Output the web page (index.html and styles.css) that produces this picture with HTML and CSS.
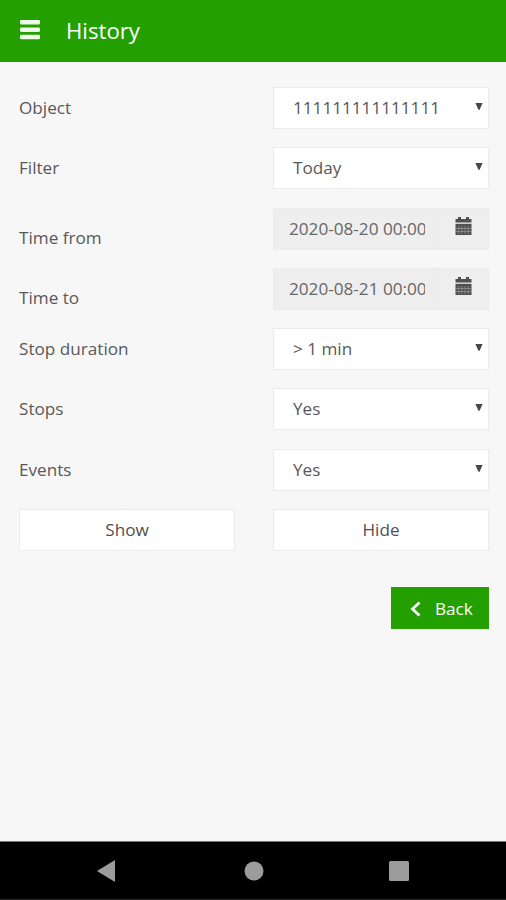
FILE: index.html
```html
<!DOCTYPE html>
<html lang="en">
<head>
<meta charset="utf-8">
<title>History</title>
<link rel="stylesheet" href="styles.css">
</head>
<body>
<header class="topbar">
  <svg class="menu-icon" width="20" height="20" viewBox="0 0 20 20"><rect y="0" width="20" height="4.5" rx="1.3"/><rect y="7.4" width="20" height="4.5" rx="1.3"/><rect y="14.8" width="20" height="4.5" rx="1.3"/></svg>
  <h1 class="title"><span>History</span></h1>
</header>
<main class="content">
  <div class="form">
    <div class="label"><span>Object</span></div>
    <div class="select"><span>111111111111111</span><svg class="arrow" width="8" height="7" viewBox="0 0 8 7"><path d="M0.4 0H7.6L4.6 6.8H3.4Z"/></svg></div>
    <div class="label"><span>Filter</span></div>
    <div class="select"><span>Today</span><svg class="arrow" width="8" height="7" viewBox="0 0 8 7"><path d="M0.4 0H7.6L4.6 6.8H3.4Z"/></svg></div>
    <div class="label label-date"><span>Time from</span></div>
    <div class="date"><div class="date-value"><span>2020-08-20 00:00</span></div><div class="date-addon"><svg width="17" height="18" viewBox="0 0 17 18"><path d="M.5 2H3V0H6V2H11V0H14V2H16.5V5.6H.5Z"/><path d="M.5 6.8H16.5V18H.5Z"/><path class="grid-lines" d="M3.7 9V17M6.9 9V17M10.1 9V17M13.3 9V17M1 11.5H16M1 14.5H16"/></svg></div></div>
    <div class="label label-date"><span>Time to</span></div>
    <div class="date"><div class="date-value"><span>2020-08-21 00:00</span></div><div class="date-addon"><svg width="17" height="18" viewBox="0 0 17 18"><path d="M.5 2H3V0H6V2H11V0H14V2H16.5V5.6H.5Z"/><path d="M.5 6.8H16.5V18H.5Z"/><path class="grid-lines" d="M3.7 9V17M6.9 9V17M10.1 9V17M13.3 9V17M1 11.5H16M1 14.5H16"/></svg></div></div>
    <div class="label"><span>Stop duration</span></div>
    <div class="select"><span>&gt; 1 min</span><svg class="arrow" width="8" height="7" viewBox="0 0 8 7"><path d="M0.4 0H7.6L4.6 6.8H3.4Z"/></svg></div>
    <div class="label"><span>Stops</span></div>
    <div class="select"><span>Yes</span><svg class="arrow" width="8" height="7" viewBox="0 0 8 7"><path d="M0.4 0H7.6L4.6 6.8H3.4Z"/></svg></div>
    <div class="label"><span>Events</span></div>
    <div class="select"><span>Yes</span><svg class="arrow" width="8" height="7" viewBox="0 0 8 7"><path d="M0.4 0H7.6L4.6 6.8H3.4Z"/></svg></div>
    <button class="button" type="button">Show</button>
    <button class="button" type="button">Hide</button>
  </div>
  <button class="back" type="button"><svg width="11" height="16" viewBox="0 0 11 16"><path d="M9.5 1.5L2.5 8L9.5 14.5"/></svg><span>Back</span></button>
</main>
<nav class="navbar">
  <svg width="18" height="22" viewBox="0 0 18 22"><path d="M0 11L18 0V22Z"/></svg>
  <svg class="home" width="20" height="20" viewBox="0 0 20 20"><circle cx="10" cy="10" r="9.5"/></svg>
  <svg width="20" height="20" viewBox="0 0 20 20"><rect width="20" height="20" rx="1.5"/></svg>
</nav>
</body>
</html>
```
FILE: styles.css
```css
* {
  box-sizing: border-box;
}

body {
  margin: 0;
  height: 900px;
  display: flex;
  flex-direction: column;
  background: #f7f7f7;
  color: #585858;
  font: 17.15px/24px "Open Sans", sans-serif;
}

svg {
  display: block;
  flex: none;
}

.topbar {
  height: 62px;
  flex: none;
  display: flex;
  align-items: center;
  gap: 26px;
  padding: 0 20px;
  background: #239f00;
  color: #fff;
}

.menu-icon {
  fill: #eefbe9;
  margin-bottom: 3px;
}

.title {
  margin: 0;
  font-size: 22.2px;
  font-weight: 400;
  line-height: 30px;
}

.content {
  flex: 1;
  display: flex;
  flex-direction: column;
  padding: 25px 17px 0 19px;
}

.form {
  display: grid;
  grid-template-columns: 216px 216px;
  grid-auto-rows: 42px;
  gap: 18.3px 38px;
}

.label {
  display: flex;
  align-items: center;
}

.label-date {
  padding-top: 18px;
}

.select {
  display: flex;
  align-items: center;
  justify-content: space-between;
  padding: 0 5.5px 0 19px;
  background: #fff;
  border: 1px solid #ebebeb;
}

.arrow {
  fill: #484848;
  margin-bottom: 3px;
}

.date {
  display: flex;
  background: #eee;
  border: 1px solid #ebebeb;
}

.date-value {
  display: flex;
  align-items: center;
  width: 137px;
  margin-left: 15px;
  overflow: hidden;
  white-space: nowrap;
  color: #666;
}

.date-value span {
  width: 136px;
  overflow: hidden;
}

.date-addon {
  flex: 1;
  display: flex;
  justify-content: center;
  margin-left: 12px;
  padding-top: 8px;
  border-left: 1px solid #ebebeb;
  fill: #505050;
}

.grid-lines {
  stroke: #999;
  stroke-width: 0.7;
  fill: none;
}

.button {
  padding: 0;
  background: #fff;
  border: 1px solid #ebebeb;
  color: #505050;
  font: inherit;
}

.back {
  align-self: flex-end;
  display: flex;
  align-items: center;
  gap: 14px;
  width: 98px;
  height: 42px;
  margin-top: 36px;
  padding: 1px 0 0 19px;
  border: 0;
  background: #239f00;
  color: #fff;
  font: inherit;
}

.back path {
  fill: none;
  stroke: #fff;
  stroke-width: 2.8;
}

.navbar {
  height: 59px;
  flex: none;
  display: flex;
  align-items: center;
  justify-content: space-between;
  padding: 0 97px;
  background: #000;
  border-top: 1px solid #777;
  border-bottom: 1px solid #222;
  fill: #9c9c9c;
}

.home {
  margin-left: 3px;
}
```
